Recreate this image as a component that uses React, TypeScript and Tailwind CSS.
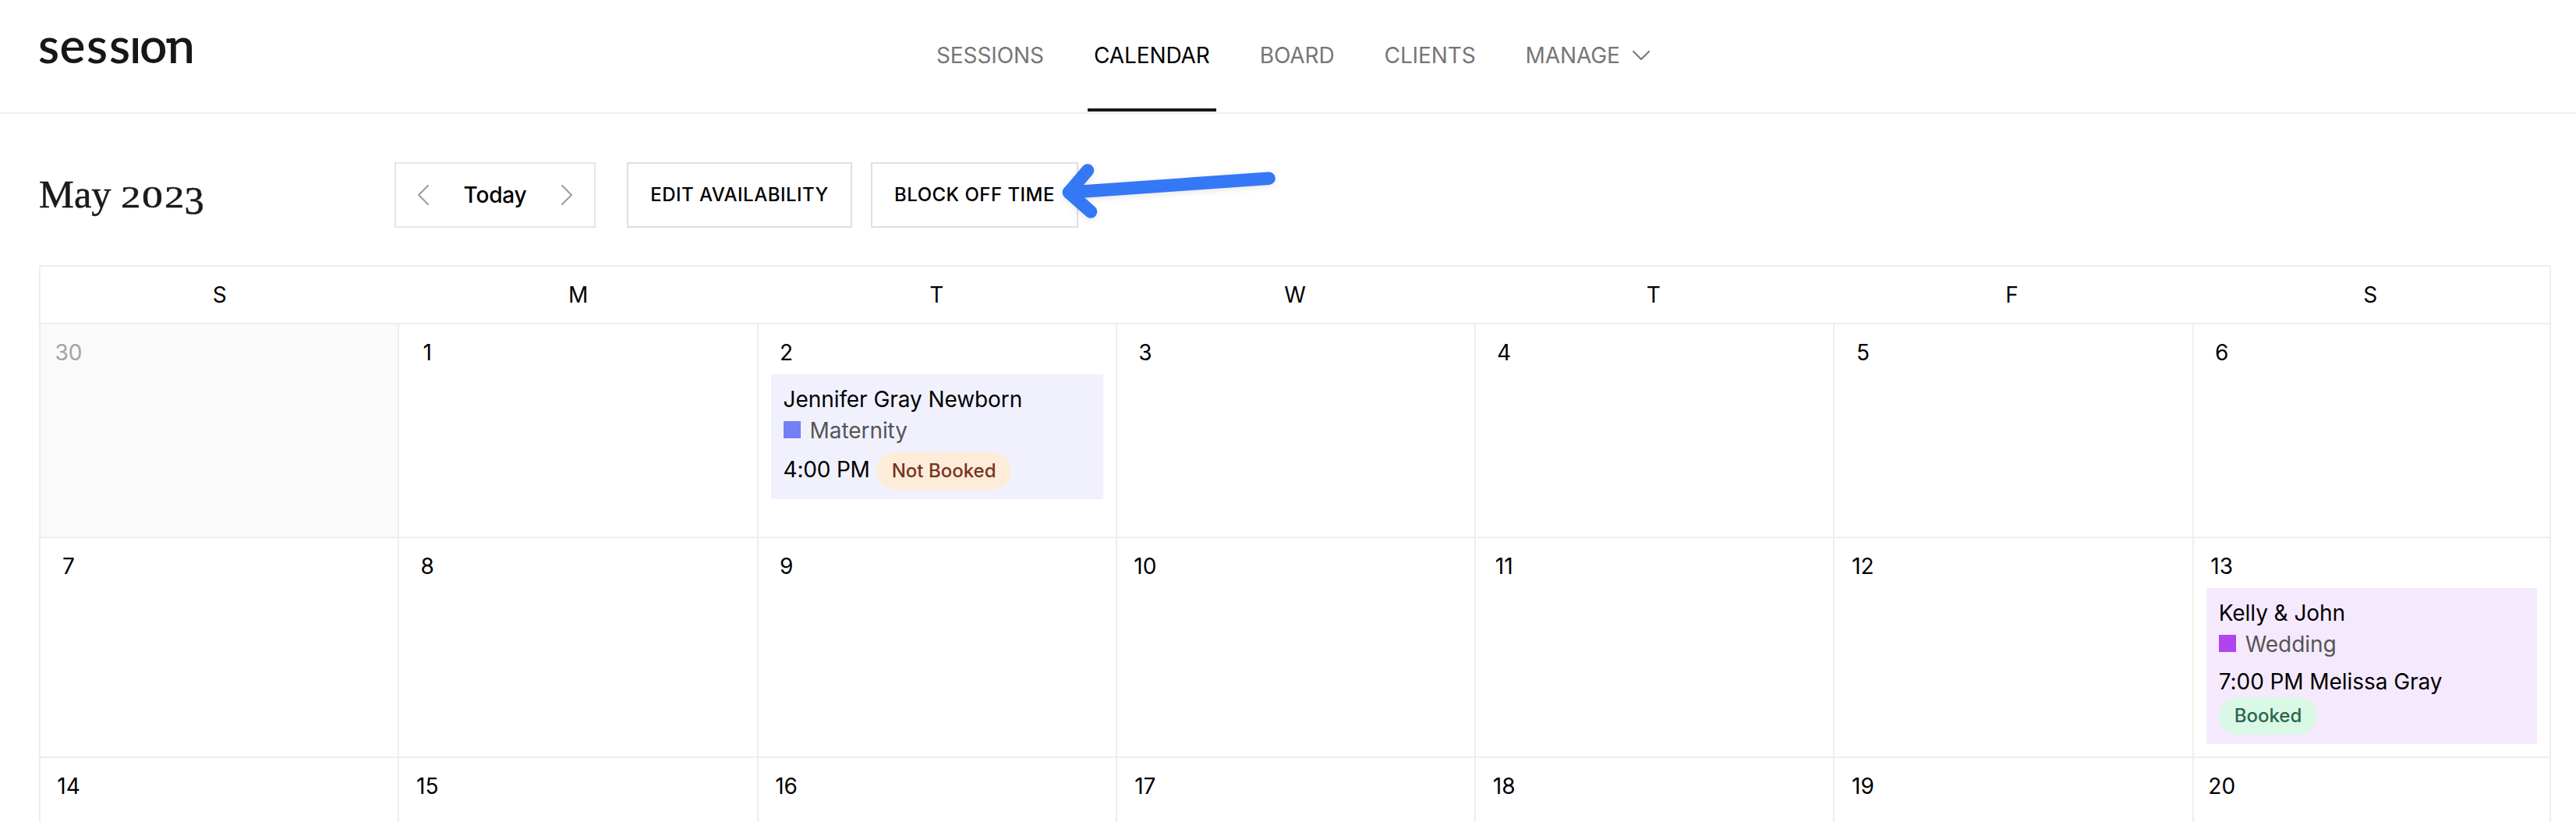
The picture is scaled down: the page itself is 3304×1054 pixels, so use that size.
import clsx from "clsx";

type Session = {
  client: string;
  type: string;
  time: string;
  status: string;
  card: string;
  swatch: string;
  pill: string;
  stacked?: boolean;
};

type Day = {
  label: number;
  outside?: boolean;
  session?: Session;
};

const navItems = [
  { label: "SESSIONS" },
  { label: "CALENDAR", active: true },
  { label: "BOARD" },
  { label: "CLIENTS" },
  { label: "MANAGE", menu: true },
];

const weekdays = ["S", "M", "T", "W", "T", "F", "S"];

const newborn: Session = {
  client: "Jennifer Gray Newborn",
  type: "Maternity",
  time: "4:00 PM",
  status: "Not Booked",
  card: "bg-[#f1f1fe]",
  swatch: "bg-[#737ff2]",
  pill: "bg-[#fdecd9] text-[#77341f]",
};

const wedding: Session = {
  client: "Kelly & John",
  type: "Wedding",
  time: "7:00 PM Melissa Gray",
  status: "Booked",
  card: "bg-[#f5eafd]",
  swatch: "bg-[#b044ee]",
  pill: "bg-[#daf8e6] text-[#2a664c]",
  stacked: true,
};

const weeks: { height: string; days: Day[] }[] = [
  {
    height: "h-[274px]",
    days: [
      { label: 30, outside: true },
      { label: 1 },
      { label: 2, session: newborn },
      { label: 3 },
      { label: 4 },
      { label: 5 },
      { label: 6 },
    ],
  },
  {
    height: "h-[282px]",
    days: [
      { label: 7 },
      { label: 8 },
      { label: 9 },
      { label: 10 },
      { label: 11 },
      { label: 12 },
      { label: 13, session: wedding },
    ],
  },
  {
    height: "h-[274px]",
    days: [
      { label: 14 },
      { label: 15 },
      { label: 16 },
      { label: 17 },
      { label: 18 },
      { label: 19 },
      { label: 20 },
    ],
  },
];

function Logo() {
  return (
    <svg
      width="212"
      height="96"
      viewBox="44 8 212 96"
      className="overflow-visible text-[#171717]"
      aria-label="session"
    >
      <text
        x="49 76.5 111 140 166 179 215"
        y="80.6"
        fill="currentColor"
        fontFamily="Lato, sans-serif"
        fontSize="62"
        fontWeight="600"
      >
        sessıon
      </text>
      <rect x="213.5" y="49.5" width="8" height="5.5" fill="currentColor" />
    </svg>
  );
}

function Chevron({ points, className }: { points: string; className: string }) {
  return (
    <svg className={className} fill="none" stroke="currentColor" strokeWidth="2" strokeLinecap="round" strokeLinejoin="round">
      <polyline points={points} />
    </svg>
  );
}

function Header() {
  return (
    <header className="flex h-[146px] border-b-2 border-[#eee]">
      <div className="w-[1193px] pt-2 pl-11">
        <Logo />
      </div>
      <nav className="flex h-[143px] gap-12 tracking-[-0.1px]">
        {navItems.map((item) => (
          <a
            key={item.label}
            className={clsx(
              "flex items-center border-b-4 px-2 pt-0.5",
              item.active ? "border-[#171717] text-black" : "border-transparent text-[#767676]",
            )}
          >
            {item.label}
            {item.menu && <Chevron points="1,1 11,11 21,1" className="ml-4 h-3 w-[22px]" />}
          </a>
        ))}
      </nav>
    </header>
  );
}

// Old-style figures: the round digits sit at x-height, the 3 drops below the baseline.
function MonthTitle() {
  return (
    <h1 className="flex w-[456px] items-baseline pt-0.5 font-['Liberation_Serif',serif] text-[50.5px] leading-[60px] text-[#1a1a1a] [-webkit-text-stroke:0.5px_#1a1a1a]">
      <span className="w-[105px] whitespace-pre">May </span>
      <span className="w-[26.5px] origin-left scale-x-130 text-[39px]">2</span>
      <span className="w-[29.5px] origin-left scale-x-138 text-[39px]">0</span>
      <span className="w-[25.5px] origin-left scale-x-130 text-[39px]">2</span>
      <span className="translate-y-[8px]">3</span>
    </h1>
  );
}

function BlueArrow() {
  return (
    <svg
      width="300"
      height="100"
      viewBox="1350 200 300 100"
      className="absolute -top-2 left-[233px] drop-shadow-[0_2px_4px_rgba(0,0,0,0.1)]"
      fill="none"
      stroke="#3478f6"
      strokeWidth="16.5"
      strokeLinecap="round"
      strokeLinejoin="round"
    >
      <path d="M1627.5 228.7 L1371 246.7" />
      <path d="M1395 218.5 L1371 246.7 L1399 271.5" />
    </svg>
  );
}

function Toolbar() {
  return (
    <div className="flex h-[84px] items-center">
      <MonthTitle />
      <div className="flex h-full w-[258px] items-center justify-between border-2 border-[#e5e5e5] px-7">
        <Chevron points="13,1 1,13 13,25" className="h-[26px] w-[14px] text-[#9b9b9b]" />
        <span className="font-medium tracking-[-0.2px]">Today</span>
        <Chevron points="1,1 13,13 1,25" className="h-[26px] w-[14px] text-[#9b9b9b]" />
      </div>
      <button className="ml-10 h-full w-[289px] border-2 border-[#e0e0e0] text-2xl font-medium tracking-[0.48px]">
        EDIT AVAILABILITY
      </button>
      <div className="relative ml-6 h-full w-[266px]">
        <button className="size-full border-2 border-[#e0e0e0] text-2xl font-medium tracking-[0.48px]">
          BLOCK OFF TIME
        </button>
        <BlueArrow />
      </div>
    </div>
  );
}

function SessionCard({ session }: { session: Session }) {
  return (
    <div className={clsx("mx-4 px-4 py-3 tracking-[-0.07px]", session.card)}>
      <p>{session.client}</p>
      <div className="flex items-center text-[#555]">
        <span className={clsx("mr-3 -mt-0.5 size-[22px]", session.swatch)} />
        {session.type}
      </div>
      <div className={clsx("mt-2 flex", session.stacked ? "flex-col items-start" : "items-center gap-2")}>
        <p className={clsx(!session.stacked && "-mt-1 tracking-[-0.2px]")}>{session.time}</p>
        <span className={clsx("h-12 rounded-full px-5 text-2xl leading-[47px] font-medium tracking-normal", session.pill)}>
          {session.status}
        </span>
      </div>
    </div>
  );
}

function DayCell({ day }: { day: Day }) {
  return (
    <div
      className={clsx(
        "border-t-2 border-l-2 border-[#eee] pt-4 last:border-r-2",
        day.outside && "bg-[#fafafa] text-[#a3a3a3]",
      )}
    >
      <div className="mb-2 ml-4 w-10 text-center">{day.label}</div>
      {day.session && <SessionCard session={day.session} />}
    </div>
  );
}

export default function App() {
  return (
    <div className="h-[1054px] w-full overflow-hidden bg-white font-[Inter,sans-serif] text-[28px] leading-10 text-black">
      <Header />
      <main className="pt-[62px] pr-8 pl-[50px]">
        <Toolbar />
        <section className="mt-12">
          <div className="grid h-[74px] grid-cols-7 items-center border-x-2 border-t-2 border-[#eee] text-center">
            {weekdays.map((name, i) => (
              <span key={i}>{name}</span>
            ))}
          </div>
          {weeks.map((week) => (
            <div key={week.days[0].label} className={clsx("grid grid-cols-7", week.height)}>
              {week.days.map((day) => (
                <DayCell key={day.label} day={day} />
              ))}
            </div>
          ))}
        </section>
      </main>
    </div>
  );
}
